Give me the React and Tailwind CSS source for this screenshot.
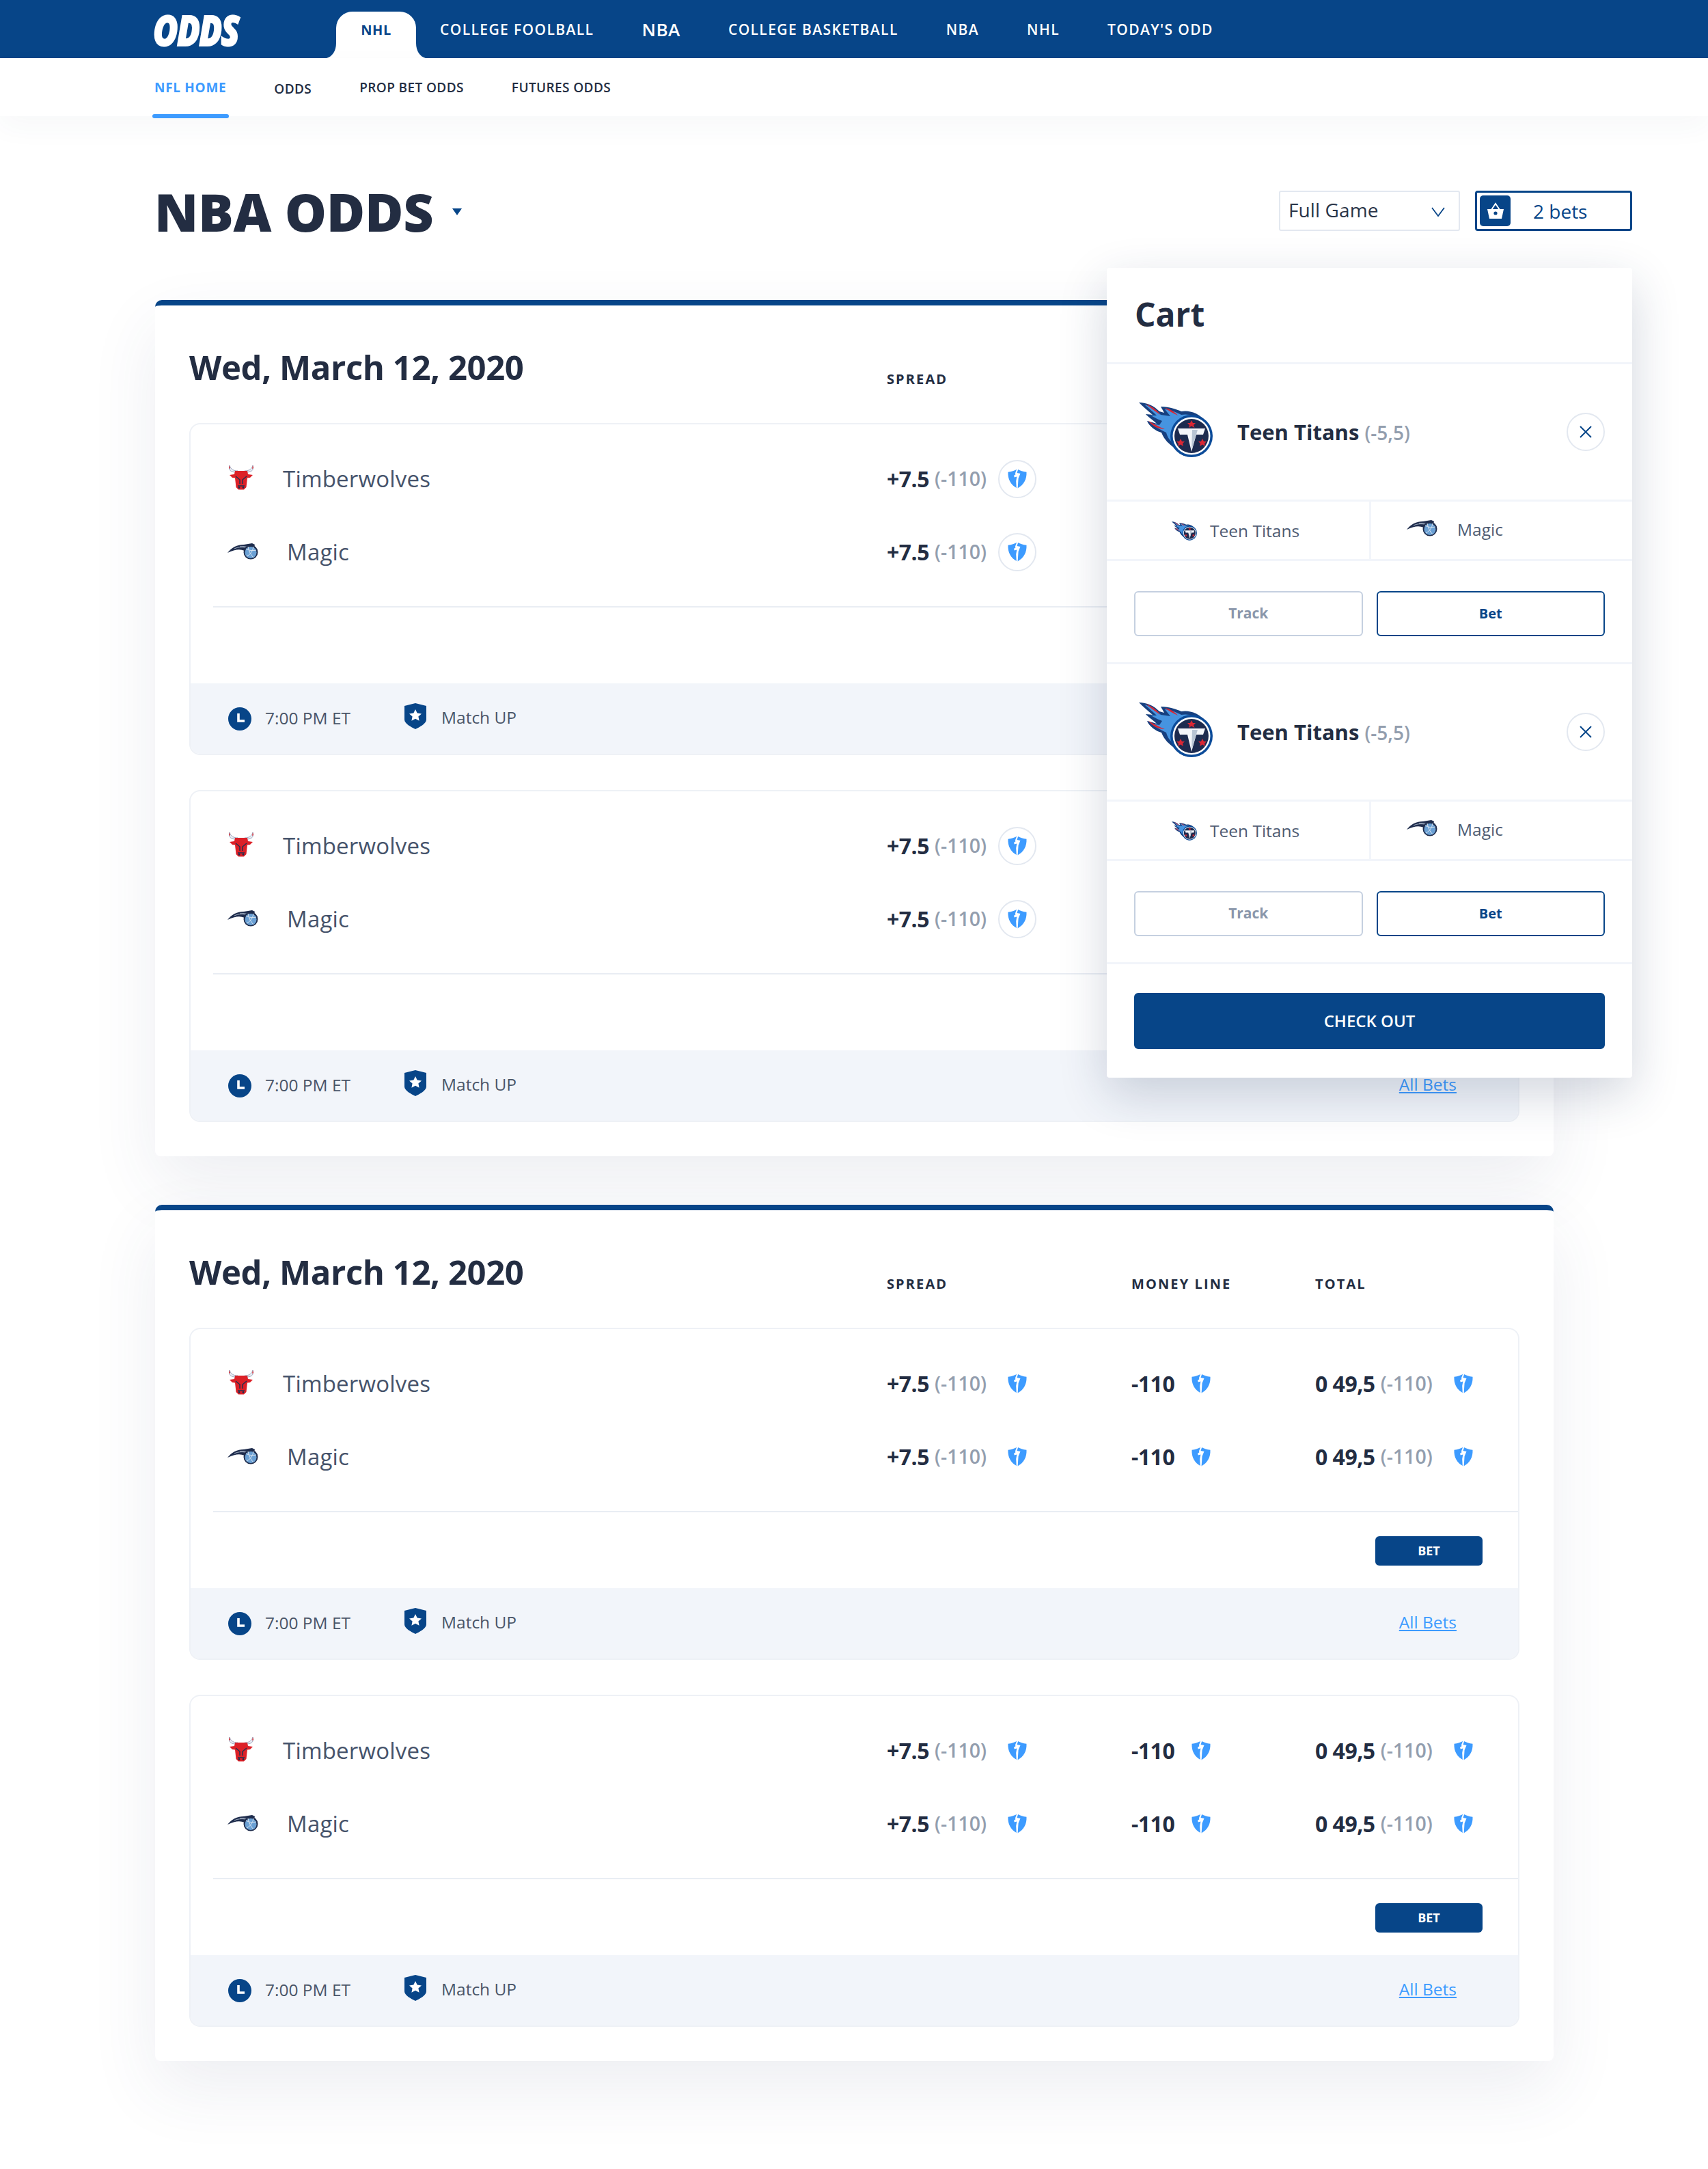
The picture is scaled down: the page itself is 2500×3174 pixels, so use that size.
import React from "react";

function Shield({ className = "w-[28px] h-[29px]" }) {
  return (
    <svg viewBox="0 0 28 29" className={className}>
      <path d="M14 .6C18 3 22.5 4.4 27.5 4.8 28 15 24 23.5 14 28.8 4 23.5 0 15 .5 4.8 5.5 4.4 10 3 14 .6Z" fill="#3d9bff" />
      <path d="M15.5 0L13.5 6 18.5 7 15.6 14 14.6 29H12.8L12.2 18 13.4 11.5 9.8 12.6 9 10 11.4 8.2 11 6.4 13.4 0Z" fill="#fff" />
    </svg>
  );
}

function Bull({ className = "w-[40px] h-[36px] -mt-[4px]" }) {
  return (
    <svg viewBox="0 0 40 36" className={className}>
      <path d="M3 0C1 6 4 10 12 10L15 8C9 8 5 6 3 0ZM37 0C39 6 36 10 28 10L25 8C31 8 35 6 37 0Z" fill="#e8ebf2" stroke="#8b98b5" strokeWidth=".8" />
      <path d="M3 0L2 4 4 5ZM37 0L38 4 36 5Z" fill="#d9252c" />
      <path d="M11 8H29L30 13 37 14 33 18 29 18.5 27.5 32 24 35.5H16L12.5 32 11 18.5 7 18 3 14 10 13Z" fill="#dc2027" />
      <path d="M12 16L18 21V27M28 16L22 21V27M15 30H25" stroke="#26324f" strokeWidth="1.5" fill="none" />
      <circle cx="17" cy="32.4" r="1.3" fill="#1d2b4f" />
      <circle cx="23" cy="32.4" r="1.3" fill="#1d2b4f" />
    </svg>
  );
}

function Magic({ className = "w-[45px] h-[25px] -mt-[2px]" }) {
  return (
    <svg viewBox="0 0 45 25" className={className}>
      <path d="M0 15C6 7 14 3 24 3L36 1 40 3 38 12 30 16C24 9 14 8 0 15Z" fill="#1f2d4d" />
      <path d="M10 9C16 6 24 6 30 8M18 6C24 5 30 6 34 9" stroke="#c3cfdf" strokeWidth=".8" fill="none" />
      <circle cx="34" cy="14" r="10.5" fill="#1f2d4d" />
      <circle cx="34" cy="14.5" r="8.5" fill="#6aa0d4" />
      <path d="M27 9C32 12 37 12 42 11M30 6C31 12 34 18 38 22M38 6C37 12 34 17 28 20" stroke="#dce6f1" strokeWidth="1" fill="none" />
    </svg>
  );
}

function Titans({ className = "w-[108px] h-[80px]" }) {
  return (
    <svg viewBox="0 0 108 80" className={className}>
      <path d="M0 0C12 0 22 5 30 13L37 15C35 11 33 8 32 6C45 6 55 10 62 13 72 11 88 14 100 30 110 50 100 70 80 79 65 81 55 72 50 65 44 60 38 56 33 44 25 42 15 35 12 27 18 28 22 30 26 31 20 25 12 20 10 17 14 17 18 18 20 18 13 12 6 6 0 0Z" fill="#17407f" />
      <path d="M8 3C18 6 26 12 32 18L46 20 38 10C48 11 56 15 62 18 74 16 80 20 85 24L60 50 52 62C46 56 42 52 40 44L34 41C28 38 22 34 19 31L30 33 34 27C26 24 20 20 17 19L26 19C20 13 14 8 8 3Z" fill="#4694e0" />
      <path d="M10 2C20 6 27 11 31 18 23 12 16 7 10 2ZM38 8C45 9 52 13 57 19 50 16 44 12 38 8ZM14 27C22 31 30 36 38 39 28 39 19 34 14 27Z" fill="#d92734" />
      <circle cx="77" cy="49" r="31" fill="#0b4b99" />
      <circle cx="77" cy="49" r="27.5" fill="#ffffff" />
      <circle cx="77" cy="49" r="25" fill="#1d2b4f" />
      <path d="M57 38H97L94 47H84L77 72 71 47H60Z" fill="#f4f6fa" />
      <path d="M78 40H86L77 70Z" fill="#b9c5d4" />
      <path d="M75 26L77 30H81L78 33 79.5 37 75 34.5 71 37 72 33 69 30H73Z" transform="translate(2 0)" fill="#d92734" />
      <path d="M61 53L63 57H67L64 60 65 64 61 61.5 57 64 58 60 55 57H59Z" fill="#d92734" />
      <path d="M93 53L95 57H99L96 60 97 64 93 61.5 89 64 90 60 87 57H91Z" fill="#d92734" />
    </svg>
  );
}

function Odd({ main, sub }) {
  return (
    <div className="flex items-center">
      <span className="text-[32px] font-bold text-[#232d42] tracking-[-0.5px]">{main}</span>
      {sub && <span className="text-[28.5px] font-semibold text-[#939eae] ml-[8px]">{sub}</span>}
    </div>
  );
}

function ShieldSlot({ circle }) {
  return circle ? (
    <div className="w-[56px] h-[56px] rounded-full border-2 border-[#e3e8f0] flex items-center justify-center">
      <Shield />
    </div>
  ) : (
    <div className="w-[56px] h-[56px] flex items-center justify-center">
      <Shield />
    </div>
  );
}

function Row({ team, logo, textClass, circle }) {
  return (
    <div className="flex items-center h-[107px]">
      <div className="w-[1019px] flex items-center pl-[54px]">
        <div className="w-[50px] flex">{logo}</div>
        <span className={`text-[33px] font-medium tracking-[0.2px] text-[#46536b] ${textClass}`}>{team}</span>
      </div>
      <div className="w-[358px] flex items-center">
        <div className="w-[163px]"><Odd main="+7.5" sub="(-110)" /></div>
        <ShieldSlot circle={circle} />
      </div>
      <div className="w-[269px] flex items-center">
        <div className="w-[74px]"><Odd main="-110" /></div>
        <ShieldSlot />
      </div>
      <div className="flex items-center">
        <div className="w-[189px]"><Odd main="0 49,5" sub="(-110)" /></div>
        <ShieldSlot />
      </div>
    </div>
  );
}

function GameCard({ circle }) {
  return (
    <div className="h-[486px] rounded-[16px] border-2 border-[#eef1f6] bg-white flex flex-col overflow-hidden">
      <div className="pt-[26px] pb-[26px] ml-[33px] border-b-2 border-[#e9edf3]">
        <div className="-ml-[33px]">
          <Row team="Timberwolves" logo={<Bull />} textClass="ml-[31px]" circle={circle} />
          <Row team="Magic" logo={<Magic />} textClass="ml-[37px]" circle={circle} />
        </div>
      </div>
      <div className="flex-1 flex justify-end pt-[35px] pr-[52px]">
        <div className="w-[157px] h-[43px] rounded-[6px] bg-[#074588] text-white text-[18px] font-bold flex items-center justify-center">BET</div>
      </div>
      <div className="h-[103px] bg-[#f2f5fa] flex items-center pl-[55px] pr-[90px] text-[24.5px] text-[#4a5568]">
        <svg viewBox="0 0 34 34" className="w-[34px] h-[34px]">
          <circle cx="17" cy="17" r="17" fill="#074588" />
          <path d="M15 9V20H24" stroke="#fff" strokeWidth="3.6" fill="none" />
        </svg>
        <span className="ml-[20px] w-[204px]">7:00 PM ET</span>
        <svg viewBox="0 0 32 38" className="w-[32px] h-[38px] -mt-[8px]">
          <path d="M16 0L32 4V24C32 30 22 35 16 38 10 35 0 30 0 24V4Z" fill="#074588" />
          <path d="M16 9L18.7 14.6 25 15.4 20.4 19.6 21.6 25.8 16 22.8 10.4 25.8 11.6 19.6 7 15.4 13.3 14.6Z" fill="#fff" />
        </svg>
        <span className="ml-[22px] -mt-[3px]">Match UP</span>
        <a className="ml-auto -mt-[3px] text-[#3d9bff] underline">All Bets</a>
      </div>
    </div>
  );
}

function Panel({ circle }) {
  return (
    <section className="bg-white rounded-t-[10px] rounded-b-[8px] border-t-8 border-[#074588] pl-[50px] pr-[50px] pb-[50px] shadow-[0_40px_100px_rgba(50,70,110,0.09)]">
      <div className="h-[172px] flex items-start">
        <h2 className="w-[1021px] text-[49px] leading-[68px] mt-[56px] font-bold text-[#232d42] tracking-[-0.4px]">Wed, March 12, 2020</h2>
        <div className="flex mt-[95px] text-[20px] leading-[26px] font-bold tracking-[2.1px] text-[#232d42]">
          <span className="w-[358px]">SPREAD</span>
          <span className="w-[269px]">MONEY LINE</span>
          <span>TOTAL</span>
        </div>
      </div>
      <div className="flex flex-col gap-[51px]">
        <GameCard circle={circle} />
        <GameCard circle={circle} />
      </div>
    </section>
  );
}

function CartItem() {
  return (
    <div className="border-b-[3px] border-[#f2f5fa]">
      <div className="h-[201px] flex items-center pl-[47px] pr-[40px] border-b-[3px] border-[#f2f5fa]">
        <Titans className="w-[108px] h-[80px] -mt-[6px]" />
        <div className="ml-[36px] flex items-baseline">
          <span className="text-[31px] font-bold text-[#232d42]">Teen Titans</span>
          <span className="ml-[8px] text-[28px] font-semibold text-[#939eae]">(-5,5)</span>
        </div>
        <div className="ml-auto w-[56px] h-[56px] rounded-full border-2 border-[#e3e8f0] flex items-center justify-center">
          <svg viewBox="0 0 20 20" className="w-[20px] h-[20px]">
            <path d="M2 2L18 18M18 2L2 18" stroke="#074588" strokeWidth="2" fill="none" />
          </svg>
        </div>
      </div>
      <div className="h-[87px] flex border-b-[3px] border-[#f2f5fa] text-[24.5px] text-[#4e5b72]">
        <div className="w-[387px] flex items-center pl-[95px] border-r-[3px] border-[#f2f5fa]">
          <Titans className="w-[37px] h-[28px] mt-[2px]" />
          <span className="ml-[19px] mt-[2px]">Teen Titans</span>
        </div>
        <div className="flex-1 flex items-center pl-[52px]">
          <Magic className="w-[45px] h-[25px] -mt-[8px]" />
          <span className="ml-[29px] -mt-[2px]">Magic</span>
        </div>
      </div>
      <div className="flex gap-[20px] px-[40px] pt-[44px] pb-[38px]">
        <div className="flex-1 h-[66px] rounded-[6px] border-2 border-[#c5d0e0] flex items-center justify-center text-[21px] font-bold text-[#8a97ab]">Track</div>
        <div className="flex-1 h-[66px] rounded-[6px] border-2 border-[#074588] flex items-center justify-center text-[20px] font-bold text-[#074588]">Bet</div>
      </div>
    </div>
  );
}

function Flare({ flip }) {
  return (
    <svg viewBox="0 0 14 22" className={`w-[14px] h-[22px] ${flip ? "-scale-x-100" : ""}`}>
      <path d="M14 0V22H0C8 20 14 12 14 0Z" fill="#fff" />
    </svg>
  );
}

export default function App() {
  const nav = ["COLLEGE FOOLBALL", "NBA", "COLLEGE BASKETBALL", "NBA", "NHL", "TODAY'S ODD"];
  return (
    <div className="min-h-[3174px] bg-white font-['Open_Sans',sans-serif] overflow-hidden">
      <header className="h-[85px] bg-[#074588] flex items-end pl-[224px]">
        <div className="w-[268px] h-[85px] flex items-center">
          <span className="text-[62px] leading-none font-extrabold italic text-white tracking-[-2px] [-webkit-text-stroke:2px_white] origin-left scale-x-[0.8]">ODDS</span>
        </div>
        <div className="relative w-[117px] h-[68px] bg-white rounded-t-[24px] flex items-center justify-center text-[20px] font-bold text-[#074588] tracking-[0.6px] pb-[15px]">
          NHL
          <span className="absolute bottom-0 -left-[14px] flex"><Flare /></span>
          <span className="absolute bottom-0 -right-[14px] flex"><Flare flip /></span>
        </div>
        <nav className="h-[85px] flex items-center text-white font-semibold text-[21px] tracking-[1.4px] pl-[35px] gap-[70px] pt-[3px]">
          {nav.map((n, i) => (
            <span key={i} className={i === 1 ? "text-[26px] font-semibold tracking-[0.6px] -mt-[2px]" : ""}>{n}</span>
          ))}
        </nav>
      </header>
      <div className="relative h-[85px] bg-white flex pl-[226px] gap-[70px] text-[19px] font-semibold tracking-[0.4px] text-[#232d42] shadow-[0_16px_40px_rgba(50,70,110,0.04)]">
        <div className="relative h-[85px] flex items-center pt-[1px] font-bold text-[#3d9bff] tracking-[0.7px]">
          NFL HOME
          <span className="absolute -left-[3px] -right-[4px] bottom-[-3px] h-[6px] rounded-full bg-[#3d9bff]"></span>
        </div>
        <div className="h-[85px] flex items-center pt-[5px]">ODDS</div>
        <div className="h-[85px] flex items-center pt-[1px]">PROP BET ODDS</div>
        <div className="h-[85px] flex items-center pt-[1px]">FUTURES ODDS</div>
      </div>

      <main className="relative ml-[226px] w-[2163px]">
        <div className="h-[269px] pt-[90px] flex items-start">
          <h1 className="text-[77px] leading-[100px] font-extrabold text-[#232d42] tracking-[-0.3px]">NBA ODDS</h1>
          <svg viewBox="0 0 14 10" className="w-[14px] h-[10px] ml-[28px] mt-[45px]">
            <path d="M0 0H14L7 10Z" fill="#074588" />
          </svg>
          <div className="ml-auto mt-[19px] flex gap-[22px]">
            <div className="w-[265px] h-[59px] rounded-[3px] border-2 border-[#e3e8f0] flex items-center pl-[12px] pr-[20px] text-[28px] font-medium text-[#2a3548] pb-[3px] tracking-[0.1px]">
              Full Game
              <svg viewBox="0 0 20 14" className="w-[20px] h-[14px] ml-auto mt-[6px]">
                <path d="M1 1L10 13 19 1" stroke="#074588" strokeWidth="1.8" fill="none" />
              </svg>
            </div>
            <div className="w-[230px] h-[59px] rounded-[4px] border-[3px] border-[#074588] flex items-center pl-[4px] text-[28px] font-medium text-[#074588]">
              <span className="w-[45px] h-[45px] rounded-[5px] bg-[#074588] flex items-center justify-center">
                <svg viewBox="0 0 26 26" className="w-[26px] h-[26px]">
                  <path d="M7 11L13 2 19 11" stroke="#fff" strokeWidth="2" fill="none" />
                  <path d="M1 10H25L22 24H4Z" fill="#fff" />
                  <circle cx="13" cy="16" r="2.6" fill="#074588" />
                </svg>
              </span>
              <span className="ml-[33px]">2 bets</span>
            </div>
          </div>
        </div>

        <div className="ml-[1px] w-[2047px] flex flex-col gap-[71px]">
          <Panel circle />
          <Panel />
        </div>

        <aside className="absolute left-[1394px] top-[222px] w-[769px] bg-white rounded-[4px] shadow-[0_24px_70px_rgba(30,50,90,0.2)]">
          <div className="h-[141px] flex items-center pl-[41px] border-b-[3px] border-[#f2f5fa]">
            <h3 className="text-[48px] font-bold text-[#232d42] -mt-[2px]">Cart</h3>
          </div>
          <CartItem />
          <CartItem />
          <div className="px-[40px] pt-[42px] pb-[42px]">
            <div className="h-[82px] rounded-[6px] bg-[#074588] flex items-center justify-center text-[24px] font-semibold text-white">CHECK OUT</div>
          </div>
        </aside>
      </main>
    </div>
  );
}
